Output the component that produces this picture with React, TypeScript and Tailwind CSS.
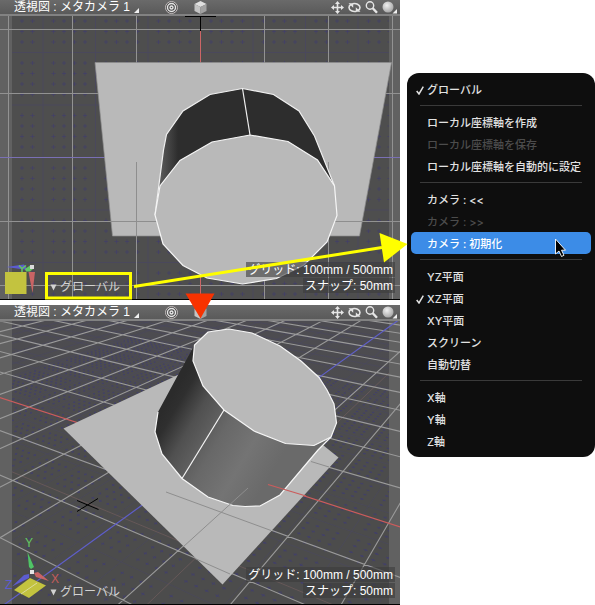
import { useState, type ReactNode } from 'react';

type Point = [number, number];

const UI_FONT = "font-['Liberation_Sans','Noto_Sans_CJK_JP',sans-serif]";
const MENU_FONT = "font-['Inter','Noto_Sans_CJK_JP',sans-serif]";

interface Item {
  label: string;
  disabled?: boolean;
  checked?: boolean;
}

const MENU_GROUPS: Item[][] = [
  [{ label: 'グローバル', checked: true }],
  [
    { label: 'ローカル座標軸を作成' },
    { label: 'ローカル座標軸を保存', disabled: true },
    { label: 'ローカル座標軸を自動的に設定' },
  ],
  [{ label: 'カメラ : <<' }, { label: 'カメラ : >>', disabled: true }, { label: 'カメラ : 初期化' }],
  [
    { label: 'YZ平面' },
    { label: 'XZ平面', checked: true },
    { label: 'XY平面' },
    { label: 'スクリーン' },
    { label: '自動切替' },
  ],
  [{ label: 'X軸' }, { label: 'Y軸' }, { label: 'Z軸' }],
];

function range(from: number, to: number) {
  return Array.from({ length: to - from + 1 }, (_, i) => from + i);
}

// Front view: the snap grid sits on a farther plane than the main grid
const SNAP = 10.5;

function frontSnapMarks() {
  let d = '';
  for (const i of range(-17, 18)) {
    for (const j of range(-13, 13)) {
      if (i % 5 === 0 || j % 5 === 0) continue;
      const x = 200.5 + i * SNAP;
      const y = 157.5 + j * SNAP;
      d += `M${x - 2} ${y}h4M${x} ${y - 2}v4`;
    }
  }
  return d;
}

// Perspective view: ground plane (u = X axis, v = Z axis) to screen
function project(u: number, v: number): Point {
  const w = 1 - 0.0543 * u - 0.091 * v;
  return [(201 + 41.4 * u - 53.2 * v) / w, (462.6 - 8.2 * u - 16.9 * v) / w];
}

function projectLow(u: number, v: number): Point {
  const w = 1.1 - 0.0543 * u - 0.091 * v;
  return [(223.3 + 41.4 * u - 53.2 * v) / w, (606.1 - 8.2 * u - 16.9 * v) / w];
}

function segment(a: Point, b: Point) {
  return `M${a[0].toFixed(1)} ${a[1].toFixed(1)}L${b[0].toFixed(1)} ${b[1].toFixed(1)}`;
}

function planeLines(fn: (u: number, v: number) => Point) {
  const alongZ = range(-16, 6).filter(n => n !== 0).map(u => segment(fn(u, -16), fn(u, 5)));
  const alongX = range(-16, 5).filter(n => n !== 0).map(v => segment(fn(-16, v), fn(6, v)));
  return alongZ.concat(alongX).join('');
}

function lowSnapMarks() {
  let d = '';
  for (const i of range(-50, 30)) {
    for (const j of range(-50, 24)) {
      if (i % 5 === 0 || j % 5 === 0) continue;
      const u = i / 5;
      const v = j / 5;
      const [x, y] = projectLow(u, v);
      if (x < 0 || x > 400 || y < 330 || y > 604) continue;
      d += segment(projectLow(u - 0.035, v), projectLow(u + 0.035, v));
      d += segment(projectLow(u, v - 0.035), projectLow(u, v + 0.035));
    }
  }
  return d;
}

const FRONT_MARKS = frontSnapMarks();
const GROUND_LINES = planeLines(project);
const LOW_LINES = planeLines(projectLow);
const LOW_MARKS = lowSnapMarks();

function FrontScene() {
  return (
    <svg viewBox="0 16 400 283" className="block w-full h-auto" aria-hidden="true">
      <defs>
        <linearGradient id="frontBody" gradientUnits="userSpaceOnUse" x1="160" y1="0" x2="178" y2="0">
          <stop offset="0" stopColor="#5a5a5a" />
          <stop offset="1" stopColor="#2d2d2d" />
        </linearGradient>
      </defs>
      <rect y="16" width="400" height="283" fill="#4e4e4e" />
      <path d={FRONT_MARKS} stroke="#454263" />
      <g stroke="#4a485c">
        {[43, 95.5, 148, 253, 305.5, 358].map(x => <path key={x} d={`M${x} 16V299`} />)}
        {[52.5, 105, 210, 262.5].map(y => <path key={y} d={`M0 ${y}H400`} />)}
      </g>
      <rect y="16" width="12" height="283" fill="#616161" />
      <rect x="389" y="16" width="11" height="283" fill="#616161" />
      <g stroke="#929292">
        {[8.5, 72.5, 136.5, 264.5, 328.5, 392.5].map(x => <path key={x} d={`M${x} 16V299`} />)}
        {[29.5, 93.5, 221.5, 285.5].map(y => <path key={y} d={`M0 ${y}H400`} />)}
      </g>
      <path d="M0 157.5H400" stroke="#7a70b4" />
      <path d="M200.5 31V299" stroke="#cc6666" />
      <path d="M185 16.5H216M200.5 16V31" stroke="#000" />

      <path d="M95 62.5H391.5L359.5 236H112.5Z" fill="#b9b9b9" stroke="#8e8e8e" strokeWidth="0.7" />
      <path d="M136.5 162V236M328.5 162V236M111 221.5H362" stroke="#8e8e8e" />

      <path
        d="M155 215L163.5 150L166.5 134.5L183 111L210 94.5L242.5 88.5L273.5 94.5L299 111L314.5 136L334.5 186L250 215Z"
        fill="url(#frontBody)"
      />
      <path
        d="M155 215L163.5 150L166.5 134.5L183 111L210 94.5L242.5 88.5L273.5 94.5L299 111L314.5 136L334.5 186"
        fill="none"
        stroke="#f0f0f0"
        strokeWidth="1.2"
      />
      <path
        d="M155 215L160 186L180 160.5L212 142L250 135L288 141.5L317.5 160L334.5 186L337 215.5L327 242L304 265L276.5 278.5L242.5 284L207 278L183 265.5L163 244Z"
        fill="#b9b9b9"
        stroke="#f6f6f6"
        strokeWidth="1.2"
      />
      <path d="M242.5 88.5L250 135" stroke="#f0f0f0" strokeWidth="1.2" />

      <path d="M5 272H26.5V294H5Z" fill="#c3c33f" />
      <path d="M28.5 272H35L32.5 293Z" fill="#c96464" />
      <path d="M6 267L24 264.5L28 270Z" fill="#5c5cd0" />
      <path d="M25 269L30 265.5H33V269L30 271.5H26Z" fill="#64c864" />
      <path d="M30 265H34V269H30Z" fill="#dcdcdc" />
      <path d="M19 265.5L22 268.5L26 265.5M22 268.5V272" fill="none" stroke="#64c864" strokeWidth="1.5" />
    </svg>
  );
}

function PerspectiveScene() {
  return (
    <svg viewBox="0 321 400 283" className="block w-full h-auto" aria-hidden="true">
      <defs>
        <linearGradient id="floor" x1="0" y1="0" x2="0" y2="1">
          <stop offset="0" stopColor="#4d4c51" />
          <stop offset="0.5" stopColor="#4c4c4c" />
          <stop offset="1" stopColor="#4c4c4c" />
        </linearGradient>
        <linearGradient id="body" gradientUnits="userSpaceOnUse" x1="168" y1="402" x2="276" y2="466">
          <stop offset="0" stopColor="#2b2b2b" />
          <stop offset="0.08" stopColor="#2f2f2f" />
          <stop offset="0.25" stopColor="#505050" />
          <stop offset="0.5" stopColor="#686868" />
          <stop offset="0.75" stopColor="#747474" />
          <stop offset="1" stopColor="#6a6a6a" />
        </linearGradient>
      </defs>
      <rect y="321" width="400" height="283" fill="url(#floor)" />
      <path d={LOW_LINES} stroke="#494860" strokeWidth="0.6" />
      <path d={LOW_MARKS} stroke="#42406a" />
      <path
        d={segment(projectLow(-16, 0), projectLow(6, 0)) + segment(projectLow(0, -16), projectLow(0, 5))}
        stroke="#665858"
      />
      <rect y="321" width="12" height="283" fill="#616161" />
      <rect x="389" y="321" width="11" height="283" fill="#616161" />
      <path d={GROUND_LINES} stroke="#9a9a9a" strokeWidth="1.1" />
      <path d={segment(project(-16, 0), project(6, 0))} stroke="#cc5c5c" strokeWidth="1.2" />
      <path d={segment(project(0, -16), project(0, 5))} stroke="#5f5fc8" strokeWidth="1.2" />

      <path d="M63.5 428.5L214 358L338.5 457.5L222.5 584.5Z" fill="#b9b9b9" />

      <path
        d="M194.5 345L178 375L158 412L155 432L162 454L182 478.5L208 497L233 505.5L245 506.5L260 506L280 495L318 450L331 437L254 380Z"
        fill="url(#body)"
      />
      <path
        d="M158 412L155 432L162 454L182 478.5L208 497L233 505.5L245 506.5L260 506L280 495L318 450L331 437"
        fill="none"
        stroke="#f6f6f6"
        strokeWidth="1.2"
      />
      <path
        d="M208 332L229 329L252 333L280 346L301 361L319 377.5L327 390L334 404L336.5 423L331 437L314 445.5L285.5 443.5L254 431L224 410L203 386L193 361L194.5 345Z"
        fill="#b9b9b9"
        stroke="#f6f6f6"
        strokeWidth="1.2"
      />
      <path d="M224 410L182 478.5" stroke="#f6f6f6" strokeWidth="1.2" />

      {/* parts of the ground grid that pass in front of the solids */}
      <path d="M166 492L271 530.5M248 488L183 547M195 558.5L230 574M311 461.5L329 467" stroke="#8e8e8e" />
      <path d="M268 484.5L306 496" stroke="#cc5c5c" strokeWidth="1.2" />

      <path d="M77 500.5L98.5 509.5M77 511.5L98 498.5" stroke="#000" />

      {/* axis gizmo */}
      <path d="M14 590L30 578L46 585.5L29 598Z" fill="#c3c33f" />
      <path d="M21 594L37 583" stroke="#dcdc9c" />
      <path d="M27.5 552L34 567L31 569L29 567Z" fill="#4fc466" />
      <path d="M12 586.5L24 575L29 574V578Z" fill="#5c5cd0" />
      <path d="M34 573L38 572L49 581L36 577Z" fill="#c96464" />
      <path d="M30 570H34V574H30Z" fill="#e4e4e4" />
      <g className="font-['Liberation_Sans',sans-serif] text-[12px]">
        <text x="25" y="547" fill="#64c864">Y</text>
        <text x="51" y="583" fill="#c45c5c">X</text>
        <text x="5" y="589" fill="#5c5cd0">Z</text>
      </g>
    </svg>
  );
}

function TargetIcon() {
  return (
    <svg viewBox="0 0 13 13" className="size-[13px]" fill="none" stroke="#e6e6e6" aria-hidden="true">
      <circle cx="6.5" cy="6.5" r="6" fill="#4a4a4a" stroke="#c4bebe" strokeWidth="1" />
      <circle cx="6.5" cy="6.5" r="4" strokeWidth="1.4" />
      <circle cx="6.5" cy="6.5" r="1.5" strokeWidth="1.4" />
    </svg>
  );
}

function CubeIcon() {
  return (
    <svg viewBox="0 0 13 13" className="size-[13px]" aria-hidden="true">
      <path d="M6.5 0L12.5 3L6.5 6L0.5 3Z" fill="#e0e0e0" />
      <path d="M0.5 3L6.5 6V13L0.5 10Z" fill="#c4c4c4" />
      <path d="M12.5 3L6.5 6V13L12.5 10Z" fill="#a2a2a2" />
    </svg>
  );
}

function MoveIcon() {
  return (
    <svg viewBox="0 0 13 13" className="size-[13px]" aria-hidden="true">
      <path
        d="M6.5 0L9 3H7.3V5.7H10V4L13 6.5L10 9V7.3H7.3V10H9L6.5 13L4 10H5.7V7.3H3V9L0 6.5L3 4V5.7H5.7V3H4Z"
        fill="#e6e6e6"
      />
    </svg>
  );
}

function RotateIcon() {
  return (
    <svg viewBox="0 0 13 13" className="size-[13px]" fill="none" stroke="#e4e4e4" strokeWidth="1.6" aria-hidden="true">
      <path d="M4.5 2.8C8 1.8 12 3.8 12 6.5C12 8 11 9 10 9.5" />
      <path d="M8.5 10.2C5 11.2 1 9.2 1 6.5C1 5 2 4 3 3.5" />
      <path d="M0.5 2.2H5.2V6.8ZM12.5 10.8H7.800V6.2Z" fill="#e4e4e4" stroke="none" />
    </svg>
  );
}

function ZoomIcon() {
  return (
    <svg viewBox="0 0 13 13" className="size-[13px]" fill="none" stroke="#e6e6e6" aria-hidden="true">
      <circle cx="5" cy="4.5" r="3.7" strokeWidth="1.4" />
      <path d="M7.5 7L12 11.8" strokeWidth="2.4" />
    </svg>
  );
}

function SphereIcon() {
  return (
    <svg viewBox="0 0 15 13" className="w-[15px] h-[13px]" aria-hidden="true">
      <defs>
        <radialGradient id="ball" cx="0.4" cy="0.35" r="0.65">
          <stop offset="0" stopColor="#f0f0f0" />
          <stop offset="1" stopColor="#a8a8a8" />
        </radialGradient>
      </defs>
      <circle cx="6" cy="6" r="5.5" fill="url(#ball)" />
      <path d="M15 8V12.5H10.5Z" fill="#f0f0f0" />
    </svg>
  );
}

function Viewport({ children }: { children: ReactNode }) {
  return (
    <section className={`relative border-b border-black text-white text-[12px] leading-[15px] ${UI_FONT}`}>
      <header className="grid grid-cols-[1fr_auto_1fr] h-4 pb-px bg-linear-to-b from-[#6a6a6a] to-[#5a5a5a] border-b-2 border-[#828282]">
        <div className="flex items-center justify-between pl-3.5 pr-4">
          <button className="flex items-end gap-1 whitespace-nowrap">
            透視図 : メタカメラ 1
            <svg viewBox="0 0 5 5" className="size-[5px] mb-[2px]" aria-hidden="true">
              <path d="M5 0V5H0Z" fill="#f0f0f0" />
            </svg>
          </button>
          <button aria-label="ターゲット"><TargetIcon /></button>
        </div>
        <button aria-label="表示"><CubeIcon /></button>
        <div className="flex items-center justify-end gap-1 pr-[3px]">
          <button aria-label="移動"><MoveIcon /></button>
          <button aria-label="回転"><RotateIcon /></button>
          <button aria-label="ズーム"><ZoomIcon /></button>
          <button aria-label="シェーディング"><SphereIcon /></button>
        </div>
      </header>

      {children}

      <div className="absolute inset-x-0 bottom-0 flex items-end justify-between pl-[50px] pr-[5px] pb-1">
        <button className="flex items-center gap-[3px] text-[#d2d2d2] whitespace-nowrap">
          <svg viewBox="0 0 7 7" className="size-[7px]" aria-hidden="true">
            <path d="M0.5 0.5H6.5L3.5 6.5Z" fill="#d2d2d2" />
          </svg>
          グローバル
        </button>
        <div className="flex flex-col items-end gap-px pb-[2px] whitespace-nowrap">
          <p className="px-[2px] pt-[2px] leading-[13px] bg-[#3c3c3c]/60">グリッド: 100mm / 500mm</p>
          <p className="px-[2px] pt-[2px] leading-[13px] bg-[#3c3c3c]/60">スナップ: 50mm</p>
        </div>
      </div>
    </section>
  );
}

function AxisMenu() {
  const [active, setActive] = useState('カメラ : 初期化');

  return (
    <div
      role="menu"
      className={`w-[188px] shrink-0 mt-[73px] px-1 py-[5px] rounded-xl bg-[#0e0e0e] text-[#e2e2e2] text-[11px] font-medium ${MENU_FONT}`}
    >
      {MENU_GROUPS.map((group, i) => (
        <div key={i} role="group">
          {i > 0 && (
            <div className="py-[5px] px-[9px]">
              <div className="h-px bg-[#3a3a3a]" />
            </div>
          )}
          {group.map(item => (
            <button
              key={item.label}
              role="menuitemradio"
              aria-checked={!!item.checked}
              disabled={item.disabled}
              onMouseEnter={() => setActive(item.label)}
              className={`flex items-center w-full h-[22px] pl-[5px] pt-[3px] rounded-[5px] text-left whitespace-nowrap disabled:text-[#4c4c4c] ${
                item.label === active ? 'bg-[#3c8ce7] text-white' : ''
              }`}
            >
              <span className="w-[11px] shrink-0">
                {item.checked && (
                  <svg viewBox="0 0 8 9" className="w-2 h-[9px]" fill="none" stroke="currentColor" strokeWidth="1.5" aria-hidden="true">
                    <path d="M0.7 5L3 8L7.3 0.7" />
                  </svg>
                )}
              </span>
              {item.label}
            </button>
          ))}
        </div>
      ))}
    </div>
  );
}

// Callouts drawn across both viewports and the menu
function Callouts() {
  return (
    <svg viewBox="0 0 595 605" className="absolute left-0 top-0 w-full h-auto pointer-events-none" aria-hidden="true">
      <rect x="46.5" y="273.5" width="84" height="24.5" fill="none" stroke="#ffff00" strokeWidth="3" />
      <path d="M134 286.5L382 247.5" stroke="#ffff00" strokeWidth="3" />
      <path d="M379.5 233L407.5 244L384 262.5Z" fill="#ffff00" />
      <path d="M185.5 293.5H214.5L200.5 318.5Z" fill="#f83200" />
      <path
        d="M555.5 239V254L559 251L561.5 256.5L564 255.3L561.5 250.2H565.5Z"
        fill="#000"
        stroke="#fff"
        strokeWidth="0.9"
      />
    </svg>
  );
}

export default function App() {
  return (
    <main className="relative flex items-start gap-[7px] bg-white">
      <div className="flex-1 min-w-0 flex flex-col gap-[5px]">
        <Viewport><FrontScene /></Viewport>
        <Viewport><PerspectiveScene /></Viewport>
      </div>
      <AxisMenu />
      <Callouts />
    </main>
  );
}
